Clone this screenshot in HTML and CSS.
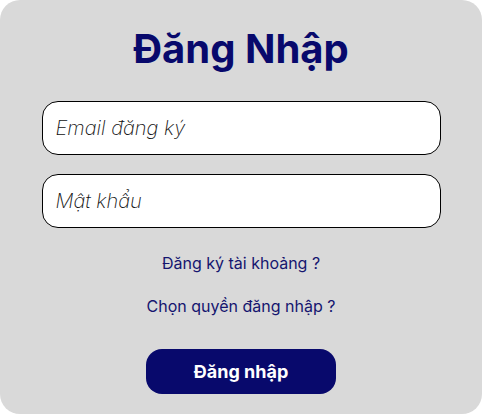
FILE: index.html
```html
<!DOCTYPE html>
<html lang="vi">
<head>
<meta charset="utf-8">
<title>Đăng Nhập</title>
<link rel="stylesheet" href="styles.css">
</head>
<body>
<main class="card">
  <h1 class="title">Đăng Nhập</h1>
  <form class="form">
    <input class="field" type="email" placeholder="Email đăng ký">
    <input class="field field-second" type="password" placeholder="Mật khẩu">
    <a class="link link-first" href="#">Đăng ký tài khoảng ?</a>
    <a class="link link-second" href="#">Chọn quyền đăng nhập ?</a>
    <button class="submit" type="button">Đăng nhập</button>
  </form>
</main>
</body>
</html>
```
FILE: styles.css
```css
html, body {
  margin: 0;
  padding: 0;
  background: #ffffff;
}

body {
  width: 482px;
  height: 414px;
  font-family: Inter, "Noto Sans", sans-serif;
}

.card {
  box-sizing: border-box;
  width: 482px;
  height: 414px;
  background: #d9d9d9;
  border-radius: 20px;
  padding-top: 25px;
  display: flex;
  flex-direction: column;
  align-items: center;
}

.title {
  margin: 0;
  font-size: 40px;
  line-height: 48px;
  font-weight: 700;
  color: #08096c;
}

.form {
  margin-top: 28px;
  display: flex;
  flex-direction: column;
  align-items: center;
}

.field {
  box-sizing: border-box;
  width: 399px;
  height: 54px;
  border: 1px solid #000000;
  border-radius: 16px;
  background: #ffffff;
  padding: 0 13px;
  font-family: Inter, "Noto Sans", sans-serif;
  font-size: 20px;
  font-weight: 250;
  font-style: italic;
  color: #111111;
  outline: none;
}

.field::placeholder {
  color: #111111;
  opacity: 1;
}

.field-second {
  margin-top: 19px;
}

.link {
  display: block;
  font-size: 16px;
  line-height: 20px;
  color: #15156f;
  text-decoration: none;
}

.link-first {
  margin-top: 25px;
}

.link-second {
  margin-top: 23px;
}

.submit {
  margin-top: 33px;
  width: 190px;
  height: 45px;
  border: none;
  border-radius: 16px;
  background: #08096c;
  color: #ffffff;
  font-family: Inter, "Noto Sans", sans-serif;
  font-size: 18px;
  font-weight: 700;
  cursor: pointer;
}
```
